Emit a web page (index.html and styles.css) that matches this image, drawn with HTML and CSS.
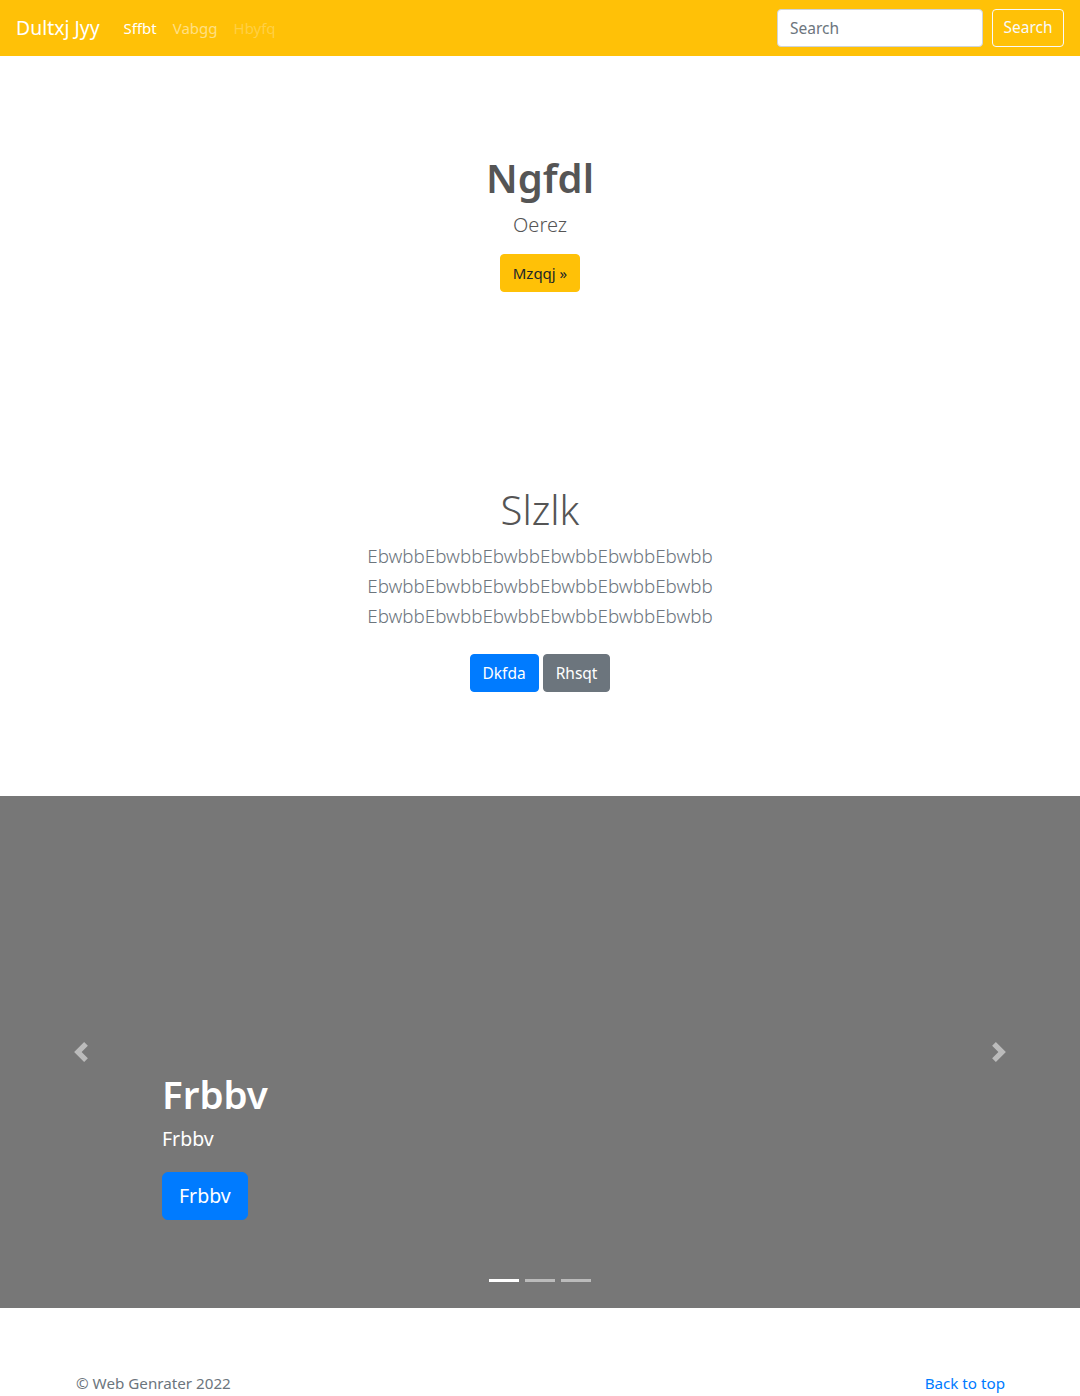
FILE: index.html
```html
<!DOCTYPE html>
<html lang="en">
<head>
<meta charset="utf-8">
<title>Dultxj Jyy</title>
<link rel="stylesheet" href="styles.css">
</head>
<body>
<nav class="navbar">
  <div class="nav-left">
    <a class="brand" href="#">Dultxj Jyy</a>
    <ul class="nav-links">
      <li><a class="nav-link active" href="#">Sffbt</a></li>
      <li><a class="nav-link" href="#">Vabgg</a></li>
      <li><a class="nav-link disabled" href="#">Hbyfq</a></li>
    </ul>
  </div>
  <form class="search-form">
    <input class="search-input" type="text" placeholder="Search">
    <button class="btn-outline-light" type="button">Search</button>
  </form>
</nav>

<section class="hero">
  <h1 class="hero-title">Ngfdl</h1>
  <p class="hero-lead">Oerez</p>
  <a class="btn btn-warning" href="#">Mzqqj &raquo;</a>
</section>

<section class="album">
  <h1 class="album-title">Slzlk</h1>
  <p class="album-lead">EbwbbEbwbbEbwbbEbwbbEbwbbEbwbb<br>EbwbbEbwbbEbwbbEbwbbEbwbbEbwbb<br>EbwbbEbwbbEbwbbEbwbbEbwbbEbwbb</p>
  <div class="album-buttons">
    <a class="btn btn-primary" href="#">Dkfda</a>
    <a class="btn btn-secondary" href="#">Rhsqt</a>
  </div>
</section>

<div class="carousel">
  <a class="carousel-control prev" href="#">
    <svg class="control-icon" viewBox="0 0 8 8" width="20" height="20"><path fill="#fff" d="M5.25 0l-4 4 4 4 1.5-1.5L4.25 4l2.5-2.5L5.25 0z"/></svg>
  </a>
  <div class="carousel-caption">
    <h1 class="caption-title">Frbbv</h1>
    <p class="caption-text">Frbbv</p>
    <p class="caption-action"><a class="btn btn-lg btn-primary" href="#">Frbbv</a></p>
  </div>
  <a class="carousel-control next" href="#">
    <svg class="control-icon" viewBox="0 0 8 8" width="20" height="20"><path fill="#fff" d="M2.75 0l-1.5 1.5L3.75 4l-2.5 2.5L2.75 8l4-4-4-4z"/></svg>
  </a>
  <ol class="carousel-indicators">
    <li class="active"></li>
    <li></li>
    <li></li>
  </ol>
</div>

<footer class="footer">
  <p class="copyright">&copy; Web Genrater 2022</p>
  <a class="back-top" href="#">Back to top</a>
</footer>
</body>
</html>
```

FILE: styles.css
```css
* { box-sizing: border-box; }
html, body { margin: 0; padding: 0; }
body {
  font-family: "Segoe UI", "Noto Sans", "Open Sans", sans-serif;
  font-size: 16px;
  line-height: 1.5;
  color: #212529;
  background: #fff;
}
a { text-decoration: none; }
h1, p { margin: 0; }

.navbar {
  height: 56px;
  background: #ffc107;
  display: flex;
  align-items: center;
  justify-content: space-between;
  padding: 8px 16px;
}
.nav-left { display: flex; align-items: center; }
.brand {
  color: #fff;
  font-size: 19.4px;
  line-height: 30px;
  margin-right: 16px;
}
.nav-links {
  list-style: none;
  margin: 0;
  padding: 0;
  display: flex;
}
.nav-link {
  display: block;
  padding: 8px;
  font-size: 15px;
  color: rgba(255,255,255,.5);
}
.nav-link.active { color: #fff; }
.nav-link.disabled { color: rgba(255,255,255,.25); }
.search-form { display: flex; align-items: center; }
.search-input {
  width: 206px;
  height: 38px;
  padding: 6px 12px;
  font: inherit;
  font-size: 15.5px;
  border: 1px solid #ced4da;
  border-radius: 4px;
  margin-right: 9px;
  color: #495057;
}
.search-input::placeholder { color: #6c757d; }
.btn-outline-light {
  width: 72px;
  height: 38px;
  padding: 0;
  font: inherit;
  font-size: 15.5px;
  color: #f8f9fa;
  background: transparent;
  border: 1px solid #f8f9fa;
  border-radius: 4px;
}

.btn {
  display: inline-block;
  padding: 6px 12px;
  font-size: 16px;
  line-height: 24px;
  border: 1px solid transparent;
  border-radius: 4px;
}
.btn-warning { background: #ffc107; border-color: #ffc107; color: #212529; font-size: 15px; }
.btn-primary { background: #007bff; border-color: #007bff; color: #fff; }
.btn-secondary { background: #6c757d; border-color: #6c757d; color: #fff; }
.album-buttons .btn { padding: 6px 12px; font-size: 15.5px; }
.btn-lg { padding: 8px 16px; font-size: 20px; line-height: 30px; border-radius: 6px; }
.caption-action .btn-lg { font-size: 19.5px; }

.hero {
  display: flex;
  flex-direction: column;
  align-items: center;
  padding: 98px 0 98px;
  text-align: center;
}
.hero-title {
  font-size: 40px;
  line-height: 48px;
  font-weight: 600;
  color: #555;
  margin-bottom: 8px;
}
.hero-lead {
  font-size: 20px;
  line-height: 30px;
  font-weight: 300;
  color: #555;
  margin-bottom: 14px;
}

.album {
  display: flex;
  flex-direction: column;
  align-items: center;
  padding: 96px 0 104px;
  text-align: center;
}
.album-title {
  font-size: 40px;
  line-height: 48px;
  font-weight: 300;
  color: #555;
  margin-bottom: 7px;
}
.album-lead {
  font-size: 18.8px;
  line-height: 30px;
  font-weight: 300;
  color: #6c757d;
  margin-bottom: 23px;
}
.album-buttons { display: flex; gap: 4px; }

.carousel {
  position: relative;
  height: 512px;
  background: #777;
  display: flex;
  justify-content: space-between;
  align-items: stretch;
}
.carousel-control {
  width: 15%;
  display: flex;
  align-items: center;
  justify-content: center;
  opacity: .5;
}
.carousel-caption {
  flex: 1;
  display: flex;
  flex-direction: column;
  justify-content: flex-end;
  align-items: flex-start;
  padding-bottom: 88px;
  color: #fff;
}
.caption-title {
  font-size: 38.5px;
  line-height: 48px;
  font-weight: 600;
  margin-bottom: 6px;
}
.caption-text {
  font-size: 19.5px;
  line-height: 30px;
  margin-bottom: 18px;
}
.carousel-indicators {
  position: absolute;
  left: 0;
  right: 0;
  bottom: 26px;
  margin: 0;
  padding: 0;
  list-style: none;
  display: flex;
  justify-content: center;
  gap: 6px;
}
.carousel-indicators li {
  width: 30px;
  height: 3px;
  background: #fff;
  opacity: .5;
}
.carousel-indicators li.active { opacity: 1; }

.footer {
  display: flex;
  justify-content: space-between;
  align-items: flex-start;
  padding: 64px 75px 48px 76px;
  color: #6c757d;
  font-size: 15.2px;
}
.back-top { color: #007bff; }
```
